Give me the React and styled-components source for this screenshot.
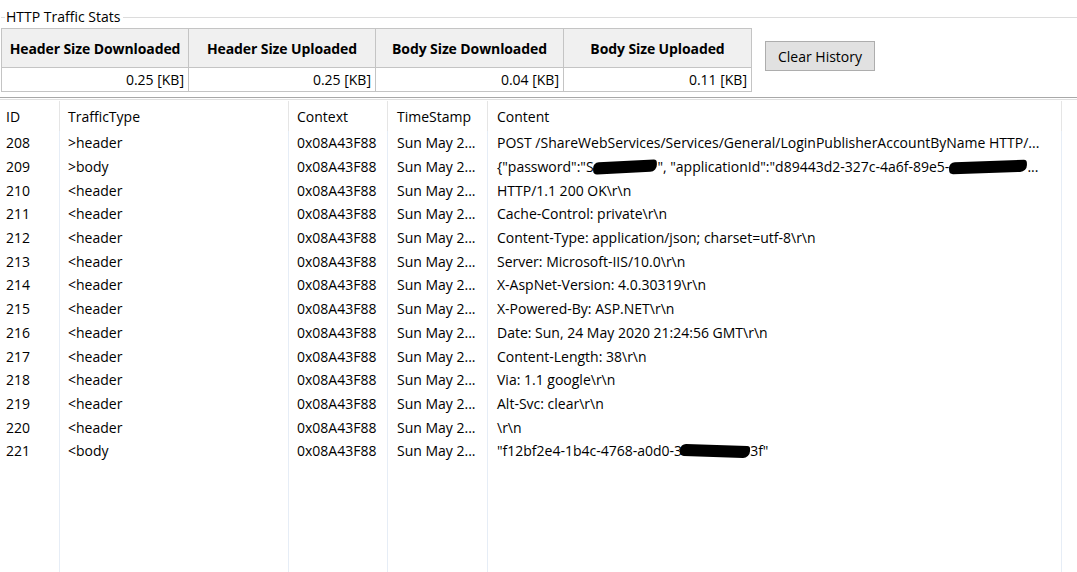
import React from 'react';
import styled, { createGlobalStyle } from 'styled-components';

const GlobalStyle = createGlobalStyle`
  html, body {
    margin: 0;
    padding: 0;
    background: #ffffff;
  }
  body {
    font-family: 'Open Sans', 'Noto Sans', sans-serif;
    font-size: 14px;
    color: #000;
  }
`;

const Page = styled.div`
  height: 100vh;
  display: flex;
  flex-direction: column;
  overflow: hidden;
`;

const GroupTitle = styled.div`
  display: flex;
  align-items: center;
  height: 22px;
  margin-top: 6px;
  &::before {
    content: '';
    width: 4px;
    border-top: 1px solid #dcdcdc;
    margin-left: 1px;
  }
  &::after {
    content: '';
    flex: 1;
    border-top: 1px solid #dcdcdc;
  }
  span {
    padding: 0 3px 0 1px;
    line-height: 22px;
  }
`;

const StatsRow = styled.div`
  display: flex;
  align-items: flex-start;
  padding-left: 1px;
`;

const StatsGrid = styled.div`
  display: grid;
  grid-template-columns: 187px 187px 188px 188px;
  grid-template-rows: 39px 24px;
  border-top: 1px solid #c4c4c4;
  border-left: 1px solid #c4c4c4;
`;

const StatHead = styled.div`
  background: #f0f0f0;
  border-right: 1px solid #c4c4c4;
  border-bottom: 1px solid #c4c4c4;
  display: flex;
  align-items: center;
  justify-content: center;
  font-weight: 700;
  font-size: 14px;
  letter-spacing: -0.1px;
`;

const StatValue = styled.div`
  border-right: 1px solid #c4c4c4;
  border-bottom: 1px solid #c4c4c4;
  display: flex;
  align-items: center;
  justify-content: flex-end;
  padding-right: 4px;
`;

const ClearButton = styled.button`
  margin: 13px 0 0 13px;
  width: 110px;
  height: 30px;
  background: #e1e1e1;
  border: 1px solid #adadad;
  font-family: inherit;
  font-size: 14px;
  color: #000;
  padding: 0;
`;

const Separator = styled.div`
  margin-top: 5px;
  height: 1px;
  border-top: 1px solid #a8a8a8;
  border-bottom: 1px solid #e0e0e0;
`;

const List = styled.div`
  flex: 1;
  display: grid;
  grid-template-columns: 60px 229px 99px 100px 574px 1fr;
  grid-template-rows: 30px repeat(14, 23.7px) 1fr;
  margin-top: 1px;
`;

const HeadCell = styled.div`
  display: flex;
  align-items: center;
  padding-left: ${p => p.$pad || 8}px;
  border-right: ${p => (p.$last ? 'none' : '1px solid #e5e5e5')};
  white-space: nowrap;
`;

const Cell = styled.div`
  display: flex;
  align-items: center;
  padding-left: ${p => p.$pad || 8}px;
  border-right: ${p => (p.$last ? 'none' : '1px solid #e6edf6')};
  white-space: nowrap;
  min-width: 0;
`;

const Redact = styled.span`
  display: inline-block;
  width: ${p => p.$w}px;
  height: 12px;
  margin-left: ${p => p.$ml || 0}px;
  background: #000;
  border-radius: 6px 3px 7px 4px;
  vertical-align: -1px;
  transform: rotate(${p => p.$r || 0}deg);
`;

const stats = [
  ['Header Size Downloaded', '0.25 [KB]'],
  ['Header Size Uploaded', '0.25 [KB]'],
  ['Body Size Downloaded', '0.04 [KB]'],
  ['Body Size Uploaded', '0.11 [KB]'],
];

const rows = [
  [208, '>header', 'POST /ShareWebServices/Services/General/LoginPublisherAccountByName HTTP/...'],
  [209, '>body', 'body209'],
  [210, '<header', 'HTTP/1.1 200 OK\\r\\n'],
  [211, '<header', 'Cache-Control: private\\r\\n'],
  [212, '<header', 'Content-Type: application/json; charset=utf-8\\r\\n'],
  [213, '<header', 'Server: Microsoft-IIS/10.0\\r\\n'],
  [214, '<header', 'X-AspNet-Version: 4.0.30319\\r\\n'],
  [215, '<header', 'X-Powered-By: ASP.NET\\r\\n'],
  [216, '<header', 'Date: Sun, 24 May 2020 21:24:56 GMT\\r\\n'],
  [217, '<header', 'Content-Length: 38\\r\\n'],
  [218, '<header', 'Via: 1.1 google\\r\\n'],
  [219, '<header', 'Alt-Svc: clear\\r\\n'],
  [220, '<header', '\\r\\n'],
  [221, '<body', 'body221'],
];

function renderContent(c) {
  if (c === 'body209') {
    return (
      <span>
        {'{"password":"Sa'}
        <Redact $w={64} $r={-3} $ml={-8} />
        {'", "applicationId":"d89443d2-327c-4a6f-89e5-'}
        <Redact $w={78} $r={-2} />
        {'...'}
      </span>
    );
  }
  if (c === 'body221') {
    return (
      <span>
        {'"f12bf2e4-1b4c-4768-a0d0-3'}
        <Redact $w={70} $r={2} $ml={-2} />
        {'3f"'}
      </span>
    );
  }
  return <span>{c}</span>;
}

const App = () => (
  <Page>
    <GlobalStyle />
    <GroupTitle>
      <span>HTTP Traffic Stats</span>
    </GroupTitle>
    <StatsRow>
      <StatsGrid>
        {stats.map(([h]) => (
          <StatHead key={h}>{h}</StatHead>
        ))}
        {stats.map(([h, v]) => (
          <StatValue key={h + 'v'}>{v}</StatValue>
        ))}
      </StatsGrid>
      <ClearButton>Clear History</ClearButton>
    </StatsRow>
    <Separator />
    <List>
      <HeadCell $pad={6}>ID</HeadCell>
      <HeadCell>TrafficType</HeadCell>
      <HeadCell>Context</HeadCell>
      <HeadCell $pad={9}>TimeStamp</HeadCell>
      <HeadCell $pad={9}>Content</HeadCell>
      <HeadCell $last />
      {rows.map(([id, type, content]) => (
        <React.Fragment key={id}>
          <Cell $pad={6}>{id}</Cell>
          <Cell>{type}</Cell>
          <Cell>0x08A43F88</Cell>
          <Cell $pad={9}>Sun May 2...</Cell>
          <Cell $pad={9}>{renderContent(content)}</Cell>
          <Cell $last />
        </React.Fragment>
      ))}
      <Cell $pad={6} />
      <Cell />
      <Cell />
      <Cell />
      <Cell />
      <Cell $last />
    </List>
  </Page>
);

export default App;
